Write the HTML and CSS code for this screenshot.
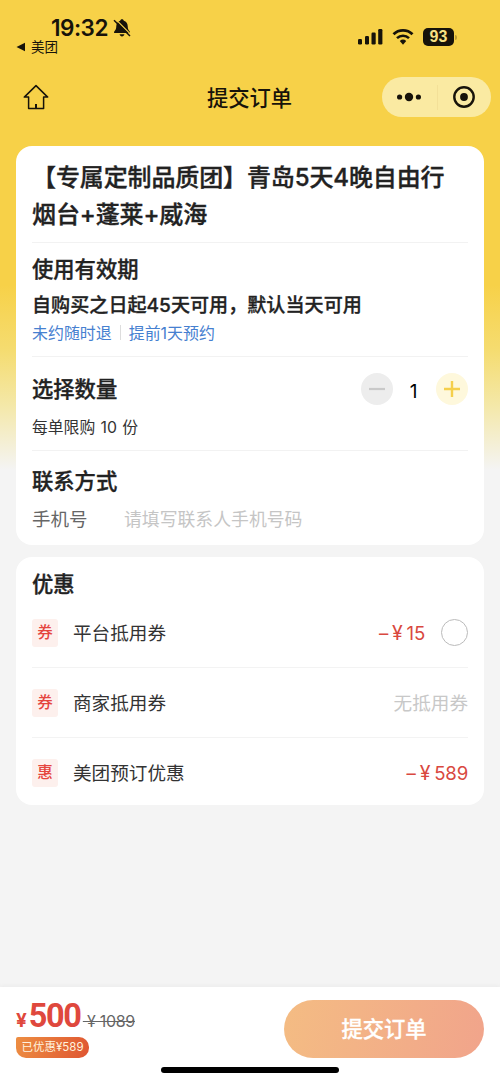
FILE: index.html
```html
<!DOCTYPE html>
<html lang="zh-CN">
<head>
<meta charset="utf-8">
<title>提交订单</title>
<link rel="stylesheet" href="styles.css">
</head>
<body>
<div class="page">
  <header class="status">
    <div class="status-left">
      <div class="clock"><span>19:32</span>
        <svg class="bell" width="20" height="20" viewBox="0 0 20 20"><path d="M10 1.200c1 0 1.700.6 1.800 1.500 2.600.8 3.800 2.800 3.900 5.400.1 3 .6 4 2 5.300.6.6.3 1.600-.6 1.600H2.900c-.9 0-1.200-1-.6-1.600 1.400-1.300 1.900-2.300 2-5.300.1-2.600 1.300-4.600 3.900-5.400C8.300 1.800 9 1.200 10 1.200zM7.600 16.200h4.800c-.3 1.400-1.200 2.200-2.400 2.200s-2.100-.8-2.400-2.200z" fill="#17130a"/><path d="M4 1.600 19 16.600" stroke="#f7d148" stroke-width="1.300"/><path d="M2 2.200 18 18" stroke="#17130a" stroke-width="1.500"/></svg>
      </div>
      <div class="back"><svg width="10" height="10" viewBox="0 0 10 10"><path d="M.5 5 9 .8v8.400z" fill="#17130a"/></svg><span>美团</span></div>
    </div>
    <div class="status-right">
      <svg width="26" height="18" viewBox="0 0 26 18" fill="#17130a"><rect x="1" y="11" width="4" height="5.500" rx="1.200"/><rect x="8" y="8" width="4" height="8.500" rx="1.200"/><rect x="14.500" y="4.500" width="4.200" height="12" rx="1.200"/><rect x="21.200" y="1" width="4.200" height="15.500" rx="1.200"/></svg>
      <svg width="22" height="18" viewBox="0 0 22 18" fill="none" stroke="#17130a"><path d="M1.500 6.200a13.600 13.600 0 0 1 19 0" stroke-width="2.800"/><path d="M5 10.100a8.700 8.700 0 0 1 12 0" stroke-width="2.600"/><path d="M7.800 13.100a4.700 4.700 0 0 1 6.400 0L11 16.700z" fill="#17130a" stroke="none"/></svg>
      <div class="battery"><span class="battery-body">93</span><span class="battery-tip"></span></div>
    </div>
  </header>

  <nav class="nav">
    <svg class="home" width="26" height="26" viewBox="0 0 26 26" fill="none" stroke="#17130a" stroke-width="1.500" stroke-linejoin="round"><path d="M13 1.600 1.300 13.100h4.300v11.500h15V13.100h4.100z"/><path d="M13 20v4.400" stroke-width="2"/></svg>
    <h1 class="nav-title">提交订单</h1>
    <div class="capsule">
      <svg width="26" height="10" viewBox="0 0 26 10" fill="#17130a"><circle cx="3.600" cy="5" r="2.600"/><circle cx="13" cy="5" r="4.200"/><circle cx="22.400" cy="5" r="2.600"/></svg>
      <span class="capsule-line"></span>
      <svg width="24" height="24" viewBox="0 0 24 24"><circle cx="12" cy="12" r="9.700" fill="none" stroke="#17130a" stroke-width="2.400"/><circle cx="12" cy="12" r="3.900" fill="#17130a"/></svg>
    </div>
  </nav>

  <main class="cards">
    <section class="card">
      <div class="product">【专属定制品质团】青岛5天4晚自由行<br>烟台+蓬莱+威海</div>
      <div class="block validity">
        <h2 class="heading">使用有效期</h2>
        <p class="period">自购买之日起45天可用，默认当天可用</p>
        <p class="tags"><span>未约随时退</span><i class="tag-line"></i><span>提前1天预约</span></p>
      </div>
      <div class="block quantity">
        <div class="quantity-row">
          <h2 class="heading">选择数量</h2>
          <div class="stepper">
            <button class="step minus"><svg width="16" height="16" viewBox="0 0 16 16"><path d="M0 8h16" stroke="#c9c9c9" stroke-width="2.200"/></svg></button>
            <span class="count">1</span>
            <button class="step plus"><svg width="16" height="16" viewBox="0 0 16 16"><path d="M0 8h16M8 0v16" stroke="#f5cf4b" stroke-width="2.400"/></svg></button>
          </div>
        </div>
        <p class="limit">每单限购 10 份</p>
      </div>
      <div class="block contact">
        <h2 class="heading">联系方式</h2>
        <div class="phone"><span class="phone-label">手机号</span><span class="phone-hint">请填写联系人手机号码</span></div>
      </div>
    </section>

    <section class="card discounts">
      <h2 class="heading">优惠</h2>
      <div class="row"><span class="badge">券</span><span class="name">平台抵用券</span><span class="amount"><span>–</span><span class="yen">¥</span><span>15</span></span><span class="radio"></span></div>
      <div class="row"><span class="badge">券</span><span class="name">商家抵用券</span><span class="none">无抵用券</span></div>
      <div class="row"><span class="badge">惠</span><span class="name">美团预订优惠</span><span class="amount"><span>–</span><span class="yen">¥</span><span>589</span></span></div>
    </section>
  </main>

  <footer class="footer">
    <div class="bar">
      <div class="total">
        <div class="prices"><span class="currency">¥</span><span class="price">500</span><span class="old">&nbsp;¥&nbsp;1089</span></div>
        <span class="saved">已优惠¥589</span>
      </div>
      <button class="submit">提交订单</button>
    </div>
    <div class="home-indicator"></div>
  </footer>
</div>
</body>
</html>
```

FILE: styles.css
```css
* { box-sizing: border-box; }
body, h1, h2, p { margin: 0; }
body { font-family: Inter, "Noto Sans CJK SC", sans-serif; color: #222; }
button { border: 0; padding: 0; font-family: inherit; }
svg { display: block; flex: none; }

.page {
  height: 1083px;
  display: flex;
  flex-direction: column;
  overflow: hidden;
  background: linear-gradient(#f7d148 0, #f7d148 285px, #f5dc70 350px, #f4e8a8 405px, #f4f4f4 470px);
}

.status { height: 70px; display: flex; justify-content: space-between; padding: 16px 43px 0 16px; color: #17130a; }
.clock { display: flex; align-items: center; height: 24px; padding-left: 35px; font-size: 22.500px; font-weight: 600; letter-spacing: -0.500px; }
.clock span { padding-bottom: 2px; }
.bell { margin-left: 4px; }
.back { display: flex; align-items: center; gap: 5px; height: 14px; font-size: 13.500px; line-height: 14px; }
.status-right { display: flex; align-items: center; height: 18px; margin-top: 12px; gap: 9px; }
.battery { display: flex; align-items: center; gap: 1px; }
.battery-body { width: 31px; height: 18px; border-radius: 5px; background: #17130a; color: #f7e184; font-family: "Liberation Sans", sans-serif; font-size: 16px; line-height: 18px; font-weight: 700; text-align: center; }
.battery-tip { width: 2px; height: 5px; border-radius: 0 2px 2px 0; background: #bd9e35; }

.nav { height: 54px; display: grid; grid-template-columns: 1fr auto 1fr; align-items: center; padding: 0 9px 0 23px; margin-bottom: 22px; }
.nav-title { font-size: 21.300px; font-weight: 500; line-height: 30px; color: #17130a; padding: 1px 15px 0 0; }
.capsule { justify-self: end; display: flex; align-items: center; width: 109px; height: 40px; border-radius: 20px; background: #faeaa2; padding: 0 15px 0 14px; justify-content: space-between; }
.capsule-line { width: 1px; height: 25px; background: #f3e098; }

.cards { flex: 1; display: flex; flex-direction: column; gap: 12px; padding: 0 16px; }
.card { background: #fff; border-radius: 16px; padding: 0 16px; }
.product { height: 96px; padding-top: 13px; font-size: 24px; line-height: 37px; letter-spacing: -0.120px; font-weight: 500; -webkit-text-stroke: 0.350px; white-space: nowrap; }
.block { border-top: 1px solid #f2f2f2; }
.heading { font-size: 21.300px; line-height: 30px; font-weight: 500; -webkit-text-stroke: 0.350px; white-space: nowrap; }
.validity { height: 114px; padding-top: 11px; }
.period { margin-top: 7px; font-size: 19.100px; line-height: 28px; font-weight: 500; -webkit-text-stroke: 0.300px; white-space: nowrap; }
.tags { display: flex; align-items: center; height: 24px; margin-top: 1px; font-size: 15.950px; color: #4680d0; }
.tag-line { width: 1px; height: 15px; margin: 0 8px; background: #ddd; }
.quantity { height: 94px; padding-top: 16px; }
.quantity-row { display: flex; justify-content: space-between; height: 32px; }
.quantity .heading { padding-top: 1px; }
.stepper { display: flex; align-items: center; }
.step { width: 32px; height: 32px; border-radius: 50%; display: grid; place-items: center; }
.minus { background: #ededed; }
.plus { background: #fef8dc; }
.count { width: 43px; padding-top: 5px; padding-right: 2px; text-align: center; color: #000; font-size: 19px; }
.limit { margin-top: 11px; font-size: 15.800px; line-height: 24px; word-spacing: 0.900px; color: #333; }
.contact { height: 95px; padding-top: 15px; }
.phone { display: flex; align-items: center; height: 26px; margin-top: 9px; }
.phone-label { width: 92px; font-size: 18.500px; color: #666; }
.phone-hint { font-size: 17.850px; color: #c5c5c5; }

.discounts { height: 248px; padding-top: 12px; }
.discounts .heading { margin-bottom: -1px; }
.row { display: flex; align-items: center; height: 70px; border-bottom: 1px solid #f3f3f3; font-size: 18.600px; line-height: 28px; }
.row:last-child { border-bottom: 0; }
.badge { width: 26px; height: 28px; margin-right: 15px; border-radius: 3px; background: #fdf0ed; color: #e5453e; font-size: 15.500px; line-height: 27px; font-weight: 500; text-align: center; }
.name { flex: 1; color: #333; }
.amount { display: flex; color: #d94840; letter-spacing: -0.200px; }
.yen { margin: 0 4px; font-size: 19.500px; }
.radio { width: 27px; height: 27px; margin-left: 16px; border: 1px solid #bbb; border-radius: 50%; }
.none { color: #c8c8c8; }

.footer { height: 96px; background: #fff; box-shadow: 0 -1px 4px #ebebeb; }
.bar { display: flex; justify-content: space-between; height: 79px; padding: 13px 16px 0; }
.prices { display: flex; align-items: baseline; height: 37px; line-height: 32px; }
.currency { font-size: 19px; font-weight: 700; color: #df483d; }
.price { width: 50px; margin-left: 2px; font-family: "Roboto", sans-serif; font-size: 32.500px; font-weight: 700; letter-spacing: -1.500px; color: #df483d; }
.old { margin-left: 4px; padding-top: 1px; color: #666; font-size: 16px; letter-spacing: -0.300px; text-decoration: line-through; white-space: nowrap; }
.saved { display: block; width: 73px; height: 21px; border-radius: 2px 10px 10px 10px; background: linear-gradient(110deg, #ed8e42, #df5531); color: #fff3df; font-size: 11.500px; line-height: 20px; text-align: center; white-space: nowrap; }
.submit { width: 200px; height: 58px; padding-bottom: 3px; border-radius: 29px; background: linear-gradient(100deg, #f4bc83, #f1a48b); color: #fff; font-size: 21.300px; font-weight: 500; -webkit-text-stroke: 0.300px; }
.home-indicator { width: 178px; height: 6px; margin: 1px auto 0; border-radius: 4px; background: #000; }
```
